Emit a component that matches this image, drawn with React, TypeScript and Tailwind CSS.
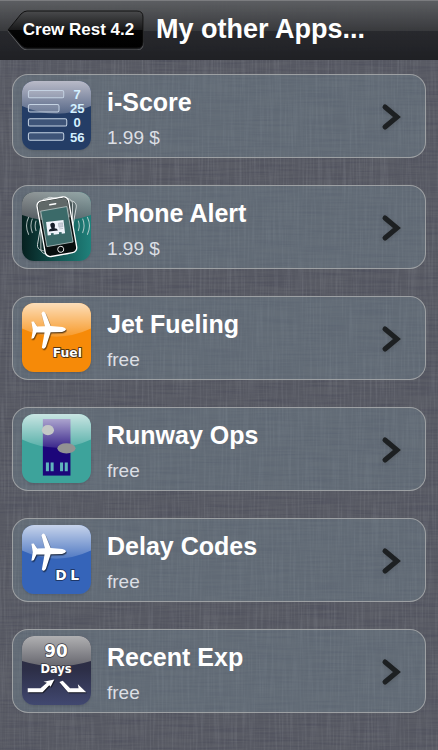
import type { ReactNode } from "react";

const Plane = () => (
  <path
    d="M58 31Q63 20 70 31L85 68L120 71Q130 73 131 78Q130 83 119 86L85 87L71 130Q65 140 59 132L67 88L43 88L35 105L28 106L32 81L28 56L35 55L45 70L68 69Z"
    fill="#fff"
    style={{ filter: "drop-shadow(2px 4px 2px rgba(0,0,0,0.6))" }}
  />
);

const ScoreIcon = () => (
  <>
    <rect width="205" height="205" fill="#243d66" />
    <path d="M0 0H205V74Q102 120 0 74Z" fill="url(#gloss)" />
    <g fill="#fff" fillOpacity="0.12" stroke="#c4d2e2" strokeWidth="3">
      <rect x="19" y="28" width="105" height="22" rx="5" />
      <rect x="19" y="70" width="91" height="22" rx="5" />
      <rect x="19" y="112" width="114" height="22" rx="5" />
      <rect x="19" y="154" width="105" height="22" rx="5" />
    </g>
    <g fill="#d3f0ff" fontFamily="Liberation Sans, sans-serif" fontSize="39" fontWeight="700" textAnchor="middle">
      <text x="164" y="54">7</text>
      <text x="164" y="96">25</text>
      <text x="164" y="138">0</text>
      <text x="164" y="180">56</text>
    </g>
  </>
);

const AlertIcon = () => (
  <>
    <rect width="205" height="205" fill="url(#teal)" />
    <path d="M0 0H205V68Q102 104 0 68Z" fill="url(#grayGloss)" opacity="0.8" />
    <g fill="none" stroke="#d5dddd" strokeWidth="3" opacity="0.8">
      <path d="M20 74Q7 100 20 127M31 79Q22 100 31 122M42 85Q36 100 42 116" />
      <path d="M194 74Q207 100 194 127M180 79Q189 100 180 122M167 85Q173 100 167 116" />
    </g>
    <g fill="#182626" fillOpacity="0.3" stroke="#dce2e2" strokeWidth="2.5">
      <rect x="57" y="20" width="94" height="160" rx="15" transform="rotate(10 102 98)" />
      <rect x="56" y="20" width="94" height="164" rx="15" />
    </g>
    <g transform="rotate(-10 105 102)">
      <rect x="56" y="19" width="95" height="168" rx="15" fill="#080e0e" stroke="#fff" strokeWidth="4" />
      <path d="M59 75V34Q59 22 71 22H136Q148 22 148 34V82Z" fill="#9ba5a5" opacity="0.6" />
      <rect x="64" y="49" width="79" height="107" fill="#3b6a69" stroke="#c7d3d2" strokeWidth="2" />
      <path d="M94 35H112" stroke="#fff" strokeWidth="4" strokeLinecap="round" />
      <circle cx="103" cy="171" r="9" fill="none" stroke="#fff" strokeWidth="2.5" />
    </g>
    <g transform="rotate(-7 100 108)">
      <path d="M74 86H126V126H116V121H108V126H92V121H84V126H74Z" fill="#eff3fa" />
      <path d="M79 115Q79 108 88 107Q81 91 92 90Q103 91 97 107Q105 108 106 115Z" fill="#151c28" />
      <path d="M110 94H122V106H110ZM110 111H122" fill="#c5cbd5" stroke="#acb5c0" strokeWidth="2" />
    </g>
  </>
);

const FuelIcon = () => (
  <>
    <rect width="205" height="205" fill="#f68a08" />
    <path d="M0 0H205V76Q102 124 0 76Z" fill="url(#softGloss)" />
    <Plane />
    <text
      x="91"
      y="161"
      fill="#fff"
      stroke="#332414"
      strokeWidth="5"
      paintOrder="stroke"
      fontFamily="DejaVu Sans, sans-serif"
      fontSize="37"
      fontWeight="700"
    >
      Fuel
    </text>
  </>
);

const RunwayIcon = () => (
  <>
    <rect width="205" height="205" fill="#3da39b" />
    <rect x="62" y="15" width="82" height="168" fill="#1c067a" />
    <path d="M0 0H205V76Q102 124 0 76Z" fill="url(#softGloss)" />
    <g fill="#60b5bd">
      <rect x="71" y="144" width="9" height="26" />
      <rect x="85" y="144" width="9" height="26" />
      <rect x="113" y="144" width="9" height="26" />
      <rect x="127" y="144" width="9" height="26" />
    </g>
    <ellipse cx="77" cy="48" rx="18" ry="15" fill="#c4c8c6" />
    <ellipse cx="132" cy="102" rx="27" ry="15" fill="#929292" />
  </>
);

const DelayIcon = () => (
  <>
    <rect width="205" height="205" fill="#3564b9" />
    <path d="M0 0H205V76Q102 124 0 76Z" fill="url(#softGloss)" />
    <Plane />
    <g
      fill="#fff"
      stroke="#182d56"
      strokeWidth="5"
      paintOrder="stroke"
      fontFamily="DejaVu Sans, sans-serif"
      fontSize="41"
      fontWeight="700"
    >
      <text x="99" y="162">D</text>
      <text x="143" y="162">L</text>
    </g>
  </>
);

const RecentIcon = () => (
  <>
    <rect width="205" height="205" fill="url(#night)" />
    <path d="M0 0H205V74Q102 106 0 74Z" fill="url(#grayGloss)" />
    <g
      fill="#fff"
      stroke="#383842"
      strokeWidth="4"
      paintOrder="stroke"
      fontFamily="DejaVu Sans, sans-serif"
      fontWeight="700"
      textAnchor="middle"
    >
      <text x="101" y="63" fontSize="50">90</text>
      <text x="101" y="110" fontSize="34">Days</text>
    </g>
    <g fill="#fff" style={{ filter: "drop-shadow(2px 3px 1px rgba(0,0,0,0.7))" }}>
      <path d="M17 155H55L74 139L64 136L96 129L85 151L81 146L61 167H17Z" />
      <path d="M111 137L121 133L143 155H168L166 143L191 167H137Z" />
    </g>
  </>
);

const apps: { name: string; price: string; icon: ReactNode }[] = [
  { name: "i-Score", price: "1.99 $", icon: <ScoreIcon /> },
  { name: "Phone Alert", price: "1.99 $", icon: <AlertIcon /> },
  { name: "Jet Fueling", price: "free", icon: <FuelIcon /> },
  { name: "Runway Ops", price: "free", icon: <RunwayIcon /> },
  { name: "Delay Codes", price: "free", icon: <DelayIcon /> },
  { name: "Recent Exp", price: "free", icon: <RecentIcon /> },
];

// Woven cloth: one noise stretched sideways, one stretched downwards
const Linen = () => (
  <svg className="pointer-events-none absolute inset-0 h-full w-full" aria-hidden="true">
    <defs>
      <filter id="weft" x="0" y="0" width="100%" height="100%">
        <feTurbulence type="fractalNoise" baseFrequency="0.02 0.5" numOctaves="2" seed="4" />
        <feColorMatrix values="0 0 0 0 0  0 0 0 0 0  0 0 0 0 0.02  1.4 0 0 0 -0.55" />
      </filter>
      <filter id="warp" x="0" y="0" width="100%" height="100%">
        <feTurbulence type="fractalNoise" baseFrequency="0.5 0.02" numOctaves="2" seed="9" />
        <feColorMatrix values="0 0 0 0 0.8  0 0 0 0 0.85  0 0 0 0 0.9  1.2 0 0 0 -0.5" />
      </filter>
      <linearGradient id="gloss" x1="0" y1="0" x2="0" y2="1">
        <stop offset="0" stopColor="#b9bac8" />
        <stop offset="1" stopColor="#b9bac8" stopOpacity="0.35" />
      </linearGradient>
      <linearGradient id="softGloss" x1="0" y1="0" x2="0" y2="1">
        <stop offset="0" stopColor="#fff" stopOpacity="0.72" />
        <stop offset="1" stopColor="#fff" stopOpacity="0.14" />
      </linearGradient>
      <linearGradient id="grayGloss" x1="0" y1="0" x2="0" y2="1">
        <stop offset="0" stopColor="#b0b0b2" />
        <stop offset="1" stopColor="#66666e" />
      </linearGradient>
      <linearGradient id="teal" x1="0" y1="0" x2="1" y2="0">
        <stop offset="0" stopColor="#06201f" />
        <stop offset="0.5" stopColor="#12524f" />
        <stop offset="1" stopColor="#1f817b" />
      </linearGradient>
      <linearGradient id="night" x1="0" y1="0" x2="0" y2="1">
        <stop offset="0" stopColor="#2a2a38" />
        <stop offset="0.5" stopColor="#2d2f48" />
        <stop offset="1" stopColor="#414870" />
      </linearGradient>
    </defs>
    <rect width="100%" height="100%" filter="url(#weft)" opacity="0.17" />
    <rect width="100%" height="100%" filter="url(#warp)" opacity="0.17" />
  </svg>
);

const BackButton = ({ label }: { label: string }) => (
  <button type="button" className="relative h-10 w-[137px] shrink-0 pl-1.5 text-[17px] font-bold text-white">
    <svg className="absolute inset-0 h-full w-full" viewBox="0 0 137 40" aria-hidden="true">
      <defs>
        <linearGradient id="back" x1="0" y1="0" x2="0" y2="1">
          <stop offset="0" stopColor="#4a4b4d" />
          <stop offset="0.5" stopColor="#1a1a1b" />
          <stop offset="0.52" stopColor="#040404" />
          <stop offset="1" stopColor="#000" />
        </linearGradient>
      </defs>
      <path
        d="M1 21L14 4Q17 1 20 1H130Q136 1 136 7V34Q136 40 130 40H20Q17 40 14 37Z"
        fill="none"
        stroke="#5b5c5e"
      />
      <path
        d="M1 20L14 4Q17 1 20 1H130Q136 1 136 7V32Q136 38 130 38H20Q17 38 14 35Z"
        fill="url(#back)"
        stroke="#101011"
      />
    </svg>
    <span className="relative whitespace-nowrap">{label}</span>
  </button>
);

const AppRow = ({ name, price, icon }: { name: string; price: string; icon: ReactNode }) => (
  <a
    href="#"
    className="flex h-[84px] items-center rounded-2xl border border-[#a4a6a8]/90 bg-[#748694]/40 pr-6 pb-0.5 pl-[9px]"
  >
    <svg className="h-[69px] w-[69px] shrink-0 rounded-xl shadow-sm" viewBox="0 0 205 205" aria-hidden="true">
      {icon}
    </svg>
    <div className="ml-4 flex-1 pt-1.5">
      <h2 className="text-[25px] leading-8 font-bold text-white">{name}</h2>
      <p className="pt-2 text-[19px] leading-6 text-[#dcdfe4]">{price}</p>
    </div>
    <svg className="mt-1 h-8 w-5 drop-shadow-sm" viewBox="0 0 20 32" fill="none" aria-hidden="true">
      <path d="M4 6L16 16L4 26" stroke="#1d2022" strokeWidth="5" strokeLinecap="round" strokeLinejoin="miter" />
    </svg>
  </a>
);

const App = () => {
  return (
    <div className="relative min-h-screen bg-[#5a5c65] font-['Liberation_Sans',Arial,sans-serif]">
      <Linen />
      <header className="relative flex h-[60px] items-center gap-3 border-t border-[#929496]/80 bg-[linear-gradient(#5c5e61ee,#37383bf2_50%,#26272bf5_51%,#1e1f23fa)] pb-0.5 pl-[7px]">
        <BackButton label="Crew Rest 4.2" />
        <h1 className="pb-0.5 text-[27px] leading-8 font-bold whitespace-nowrap text-white">My other Apps...</h1>
      </header>
      <main className="relative flex flex-col gap-[27px] px-3 pt-3.5 pb-9">
        {apps.map((app) => (
          <AppRow key={app.name} {...app} />
        ))}
      </main>
    </div>
  );
};

export default App;
